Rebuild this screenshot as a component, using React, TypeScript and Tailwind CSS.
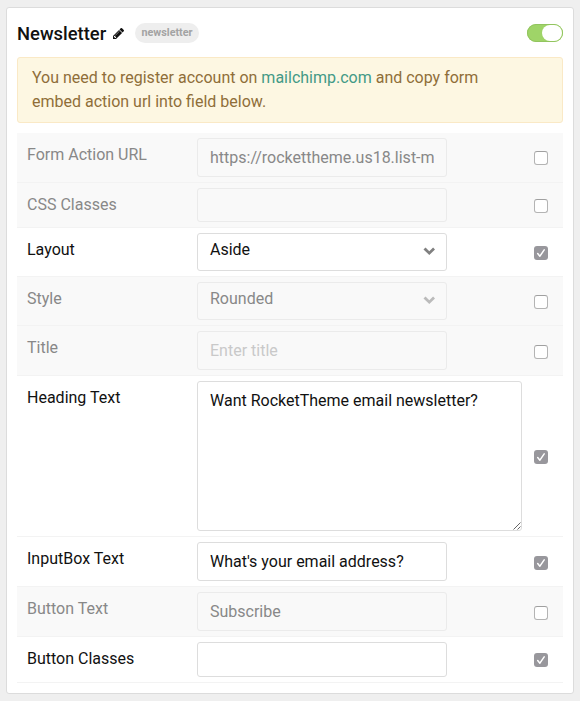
type Field = {
  label: string;
  kind: "input" | "select" | "textarea";
  value?: string;
  placeholder?: string;
  on: boolean;
  row: string;
  control: string;
  check: string;
};

const fields: Field[] = [
  { label: "Form Action URL", kind: "input", value: "https://rockettheme.us18.list-manage.com/subscribe/post", on: false, row: "h-[50px]", control: "h-[39px]", check: "mt-[18px]" },
  { label: "CSS Classes", kind: "input", on: false, row: "h-[45px]", control: "h-[34px]", check: "mt-[16px]" },
  { label: "Layout", kind: "select", value: "Aside", on: true, row: "h-[49px]", control: "h-[38px]", check: "mt-[18px]" },
  { label: "Style", kind: "select", value: "Rounded", on: false, row: "h-[49px]", control: "h-[38px]", check: "mt-[18px]" },
  { label: "Title", kind: "input", placeholder: "Enter title", on: false, row: "h-[50px]", control: "h-[39px]", check: "mt-[19px]" },
  { label: "Heading Text", kind: "textarea", value: "Want RocketTheme email newsletter?", on: true, row: "h-[161px]", control: "h-[150px]", check: "mt-[74px]" },
  { label: "InputBox Text", kind: "input", value: "What's your email address?", on: true, row: "h-[50px]", control: "h-[39px]", check: "mt-[19px]" },
  { label: "Button Text", kind: "input", value: "Subscribe", on: false, row: "h-[50px]", control: "h-[39px]", check: "mt-[19px]" },
  { label: "Button Classes", kind: "input", on: true, row: "h-[46px]", control: "h-[35px]", check: "mt-[16px]" },
];

function Pencil() {
  return (
    <svg viewBox="128 149 1515 1515" className="mt-[2px] ml-[7px] size-[11px]" fill="currentColor">
      <path d="M491 1536l91-91-235-235-91 91v107h128v128h107zm523-928q0-22-22-22-10 0-17 7l-542 542q-7 7-7 17 0 22 22 22 10 0 17-7l542-542q7-7 7-17zm-54-192l416 416-832 832h-416v-416l832-832zm683 96q0 53-37 90l-166 166-416-416 166-165q36-38 90-38 53 0 91 38l235 234q37 39 37 91z" />
    </svg>
  );
}

function Check({ on }: { on: boolean }) {
  if (!on) {
    return <span className="block size-[14px] rounded-[3px] border border-[#b4b4b4] border-t-[#a0a0a0] bg-white" />;
  }
  return (
    <span className="block size-[14px] rounded-[3px] bg-[#98979c]">
      <svg viewBox="0 0 14 14" className="size-[14px]" fill="none" stroke="#fff" strokeWidth="1.5" strokeLinecap="round" strokeLinejoin="round">
        <path d="M3.7 7.6 L5.9 10.2 L10.2 3.9" />
      </svg>
    </span>
  );
}

function Control({ field }: { field: Field }) {
  const border = field.on ? "border-[#dddddd] bg-white" : "border-[#ebebeb] bg-[#f9f9f9]";
  if (field.kind === "textarea") {
    return (
      <div className={`relative w-[325px] ${field.control}`}>
        <textarea
          readOnly
          value={field.value}
          className={`block h-full w-full resize-none rounded-[3px] border px-3 py-[7px] text-base leading-6 outline-none ${border}`}
        />
        <svg viewBox="0 0 8 8" className="absolute right-[1px] bottom-[1px] size-2" stroke="#555" strokeWidth="0.9" fill="none">
          <path d="M0.5 7.5 L7.5 0.5 M4.5 7.5 L7.5 4.5" />
        </svg>
      </div>
    );
  }
  if (field.kind === "select") {
    return (
      <div className={`flex w-[250px] items-start justify-between rounded-[3px] border pr-[11px] pl-3 ${field.control} ${border}`}>
        <span className="pt-[4px] leading-6">{field.value}</span>
        <svg viewBox="0 0 12 8" className={`mt-[13px] h-2 w-3 ${field.on ? "text-[#808080]" : "text-[#bbbbbb]"}`} fill="currentColor">
          <path d="M0.5 2.6 L2.5 0.6 L6.3 4.3 L10.1 0.6 L12 2.6 L6.3 8 Z" />
        </svg>
      </div>
    );
  }
  return (
    <div className={`flex w-[250px] rounded-[3px] border px-3 ${field.control} ${border}`}>
      <input
        readOnly
        value={field.value ?? ""}
        placeholder={field.placeholder}
        className="w-full min-w-0 bg-transparent text-base leading-6 outline-none placeholder:text-[#c9c9c9]"
      />
    </div>
  );
}

export default function App() {
  return (
    <div className="h-[701px] w-[580px] bg-[#efefef] pt-[7px] pl-[6px] font-['Roboto',sans-serif] text-base text-[#111111]">
      <section className="h-[687px] w-[568px] rounded-[3px] border border-[#dcdcdc] bg-white px-[10px]">
        <header className="flex h-[49px] items-center">
          <h1 className="w-[89px] pt-[3px] text-[18.4px] leading-6 font-medium whitespace-nowrap">Newsletter</h1>
          <Pencil />
          <span className="ml-[11px] flex h-5 w-16 items-center justify-center rounded-full bg-[#eeeeee] text-[10.8px] leading-4 font-bold text-[#a3a3a3]">
            newsletter
          </span>
          <span className="ml-auto flex h-[18px] w-9 justify-end rounded-full bg-[#9fd468] p-px shadow-[inset_0_0_0_1px_#92c45f]">
            <span className="h-4 w-5 rounded-full bg-white" />
          </span>
        </header>
        <div className="h-[66px] rounded-[3px] border border-[#fae9c6] bg-[#fdf7e2] py-2 pl-[14px] leading-6 text-[#8f6e39]">
          <div className="flex whitespace-pre">
            <span>You need to register account on </span>
            <a className="text-[#439a86]">mailchimp.com</a>
            <span> and copy form</span>
          </div>
          <div>embed action url into field below.</div>
        </div>
        <div className="mt-[10px]">
          {fields.map((field) => (
            <div
              key={field.label}
              className={`flex items-start border-b border-[#f3f3f3] pr-[15px] pl-[10px] ${field.row} ${field.on ? "text-[#111111]" : "bg-[#f9f9f9] text-[#888888]"}`}
            >
              <label className="w-[170px] pt-[10px] leading-6">{field.label}</label>
              <div className="pt-[5px]">
                <Control field={field} />
              </div>
              <div className={`ml-auto ${field.check}`}>
                <Check on={field.on} />
              </div>
            </div>
          ))}
        </div>
      </section>
    </div>
  );
}
